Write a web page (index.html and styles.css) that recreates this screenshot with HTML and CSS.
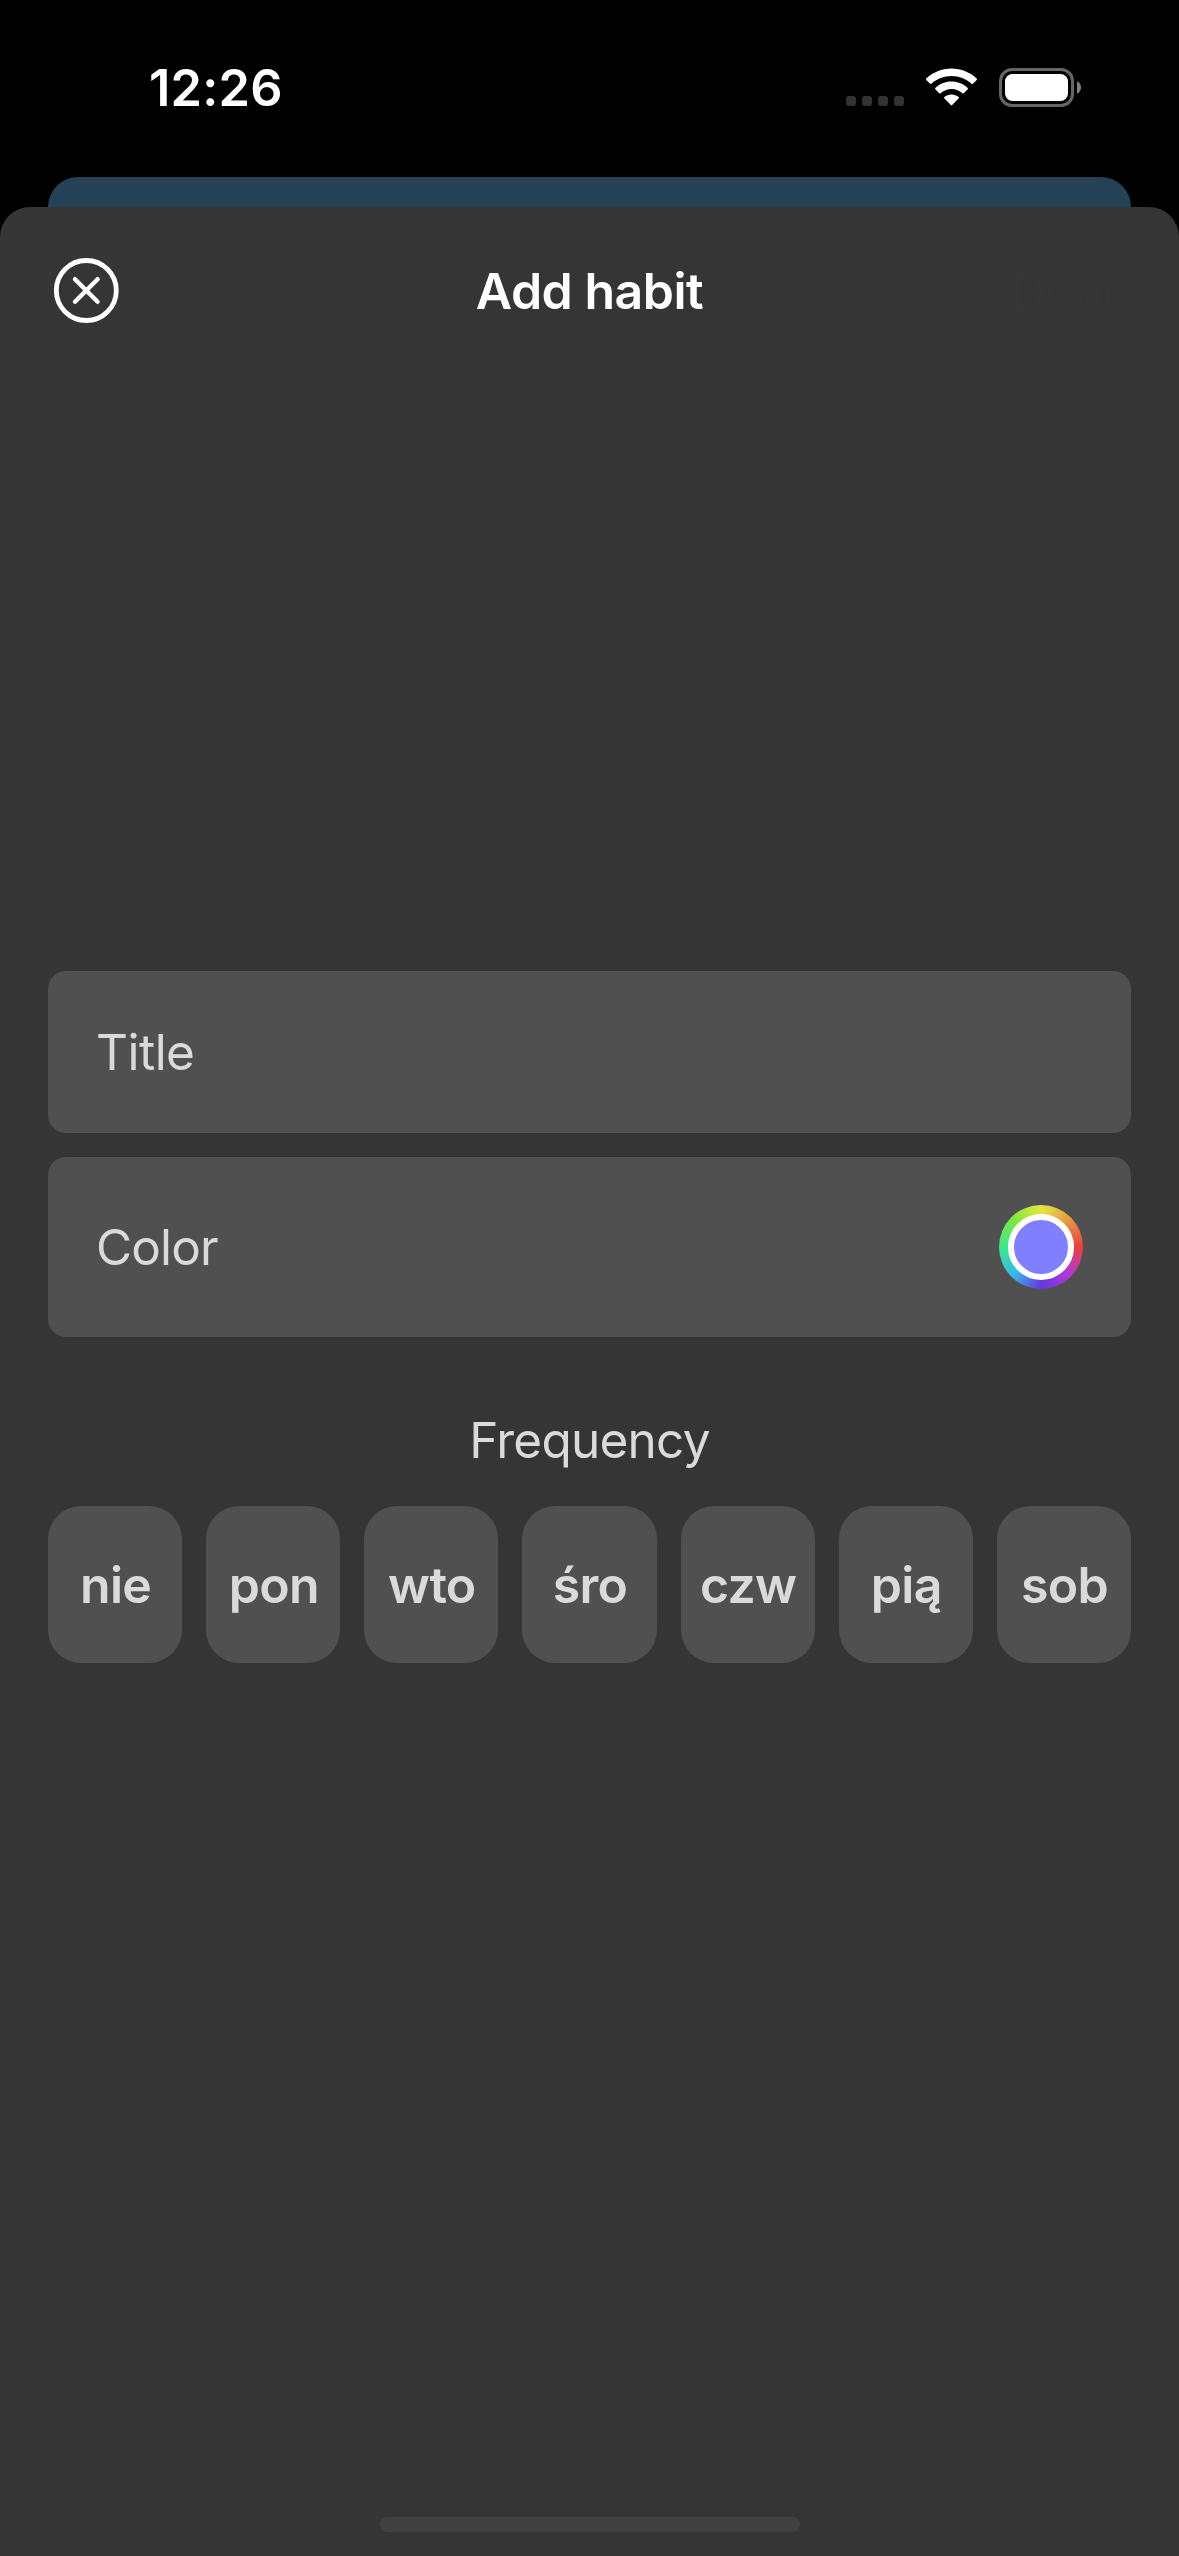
FILE: index.html
```html
<!DOCTYPE html>
<html lang="en">
<head>
<meta charset="utf-8">
<title>Add habit</title>
<link rel="stylesheet" href="styles.css">
</head>
<body>
<div class="status-bar">
  <time class="clock">12:26</time>
  <div class="status-icons">
    <div class="signal"><i></i><i></i><i></i><i></i></div>
    <svg class="wifi" width="51" height="38" viewBox="0 0 51 38">
      <g fill="#fff">
        <path d="M25.500 0.500C35.200 0.500 44.200 4.300 50.700 10.600C51.100 11 51.100 11.500 50.700 11.900L46.900 15.800C46.500 16.200 46 16.200 45.600 15.800C40.200 10.700 33.200 7.900 25.500 7.900C17.800 7.900 10.800 10.700 5.400 15.800C5 16.200 4.500 16.200 4.100 15.800L0.300 11.900C-0.100 11.500 -0.100 11 0.300 10.600C6.800 4.300 15.800 0.500 25.500 0.500Z"/>
        <path d="M25.500 13.600C31.700 13.600 37.400 16 41.700 20C42.100 20.400 42.100 20.900 41.700 21.300L37.800 25.200C37.400 25.600 36.900 25.600 36.500 25.200C33.500 22.500 29.700 20.900 25.500 20.900C21.300 20.900 17.500 22.500 14.500 25.200C14.100 25.600 13.600 25.600 13.200 25.200L9.300 21.300C8.900 20.900 8.900 20.400 9.300 20C13.600 16 19.300 13.600 25.500 13.600Z"/>
        <path d="M25.500 26.400C28.200 26.400 30.700 27.300 32.700 29C33.100 29.400 33.100 29.900 32.700 30.300L26.200 37C25.800 37.400 25.200 37.400 24.800 37L18.300 30.300C17.900 29.900 17.900 29.400 18.300 29C20.300 27.300 22.800 26.400 25.500 26.400Z"/>
      </g>
    </svg>
    <svg class="battery" width="82" height="39" viewBox="0 0 82 39">
      <rect x="1.500" y="1.500" width="72" height="36" rx="11.500" fill="none" stroke="#666" stroke-width="3"/>
      <rect x="6" y="6" width="63" height="27" rx="7.500" fill="#fff"/>
      <path d="M78 13.200C80.500 14.300 82 16.700 82 19.500S80.500 24.700 78 25.800Z" fill="#808080"/>
    </svg>
  </div>
</div>
<div class="backdrop"></div>
<main class="sheet">
  <header class="header">
    <button class="close" aria-label="Close">
      <svg width="66" height="66" viewBox="0 0 66 66" fill="none" stroke="#fff">
        <circle cx="33.300" cy="32.500" r="30" stroke-width="4.800"/>
        <path d="M22 21.200L44.600 43.800M44.600 21.200L22 43.800" stroke-width="4.400" stroke-linecap="round"/>
      </svg>
    </button>
    <h1 class="title">Add habit</h1>
    <button class="done" disabled>Done</button>
  </header>
  <section class="form">
    <div class="field field-title">Title</div>
    <div class="field field-color"><span>Color</span><div class="color-well"><div class="swatch"></div></div></div>
    <h2 class="frequency">Frequency</h2>
    <div class="days">
      <div class="day">nie</div>
      <div class="day">pon</div>
      <div class="day">wto</div>
      <div class="day">śro</div>
      <div class="day">czw</div>
      <div class="day">pią</div>
      <div class="day">sob</div>
    </div>
  </section>
  <div class="home-indicator"></div>
</main>
</body>
</html>
```
FILE: styles.css
```css
* {
  box-sizing: border-box;
}

body {
  margin: 0;
  width: 1179px;
  height: 2556px;
  display: flex;
  flex-direction: column;
  overflow: hidden;
  background: #000;
  color: #dadada;
  font: 400 49.5px/60px Inter, "Liberation Sans", sans-serif;
}

button {
  margin: 0;
  padding: 0;
  border: 0;
  background: none;
  font: inherit;
}

.status-bar {
  height: 177px;
  flex: none;
  display: flex;
  justify-content: space-between;
  align-items: flex-start;
  padding: 58px 98px 0 149px;
}

.clock {
  color: #fff;
  font-size: 50.5px;
  font-weight: 600;
  letter-spacing: 0.2px;
}

.status-icons {
  display: flex;
  align-items: flex-start;
  padding-top: 10px;
}

.signal {
  display: flex;
  gap: 6px;
  margin: 28px 22px 0 0;
}

.signal i {
  width: 10px;
  height: 10px;
  border-radius: 3px;
  background: #333;
}

.wifi {
  margin-right: 22px;
}

.backdrop {
  flex: none;
  height: 60px;
  margin: 0 48px -30px;
  border-radius: 30px 30px 0 0;
  background: #244156;
}

.sheet {
  flex: 1;
  display: flex;
  flex-direction: column;
  border-radius: 30px 30px 0 0;
  background: #353535;
}

.header {
  flex: none;
  height: 168px;
  display: grid;
  grid-template-columns: 1fr auto 1fr;
  align-items: center;
  padding: 0 48px 0 53px;
}

.close {
  width: 66px;
  height: 66px;
}

.close svg {
  display: block;
}

.title {
  margin: 0 5px 0 0;
  color: #fff;
  font-size: 50px;
  font-weight: 600;
  letter-spacing: -0.5px;
}

.done {
  justify-self: end;
  color: #363636;
  letter-spacing: -0.6px;
}

.form {
  flex: 1;
  display: flex;
  flex-direction: column;
  padding: 596px 48px 0;
}

.field {
  display: flex;
  align-items: center;
  justify-content: space-between;
  padding: 0 48px;
  border-radius: 18px;
  background: #505050;
}

.field-title {
  height: 162px;
  letter-spacing: -0.5px;
}

.field-color {
  height: 180px;
  margin-top: 24px;
  letter-spacing: -0.9px;
}

.color-well {
  width: 84px;
  height: 84px;
  display: grid;
  place-items: center;
  border-radius: 50%;
  background: conic-gradient(#e6e640, #e69a45 12.5%, #e64040 25%, #b038d8 37.5%, #6638e0 50%, #38b8e8 62.5%, #40e690 75%, #80e640 87.5%, #e6e640);
}

.swatch {
  width: 66px;
  height: 66px;
  border: 6px solid #fff;
  border-radius: 50%;
  background: #8080ff;
}

.frequency {
  margin: 73px 0 36px;
  font-size: 49.5px;
  font-weight: 400;
  letter-spacing: -0.75px;
  text-align: center;
}

.days {
  display: grid;
  grid-template-columns: repeat(7, 1fr);
  gap: 24px;
}

.day {
  height: 157px;
  display: flex;
  align-items: center;
  justify-content: center;
  padding-left: 1px;
  border-radius: 33px;
  background: #505050;
  font-size: 50px;
  font-weight: 600;
  letter-spacing: -0.7px;
}

.home-indicator {
  flex: none;
  width: 420px;
  height: 15px;
  margin: 0 auto 24px;
  border-radius: 8px;
  background: #414141;
}
```
